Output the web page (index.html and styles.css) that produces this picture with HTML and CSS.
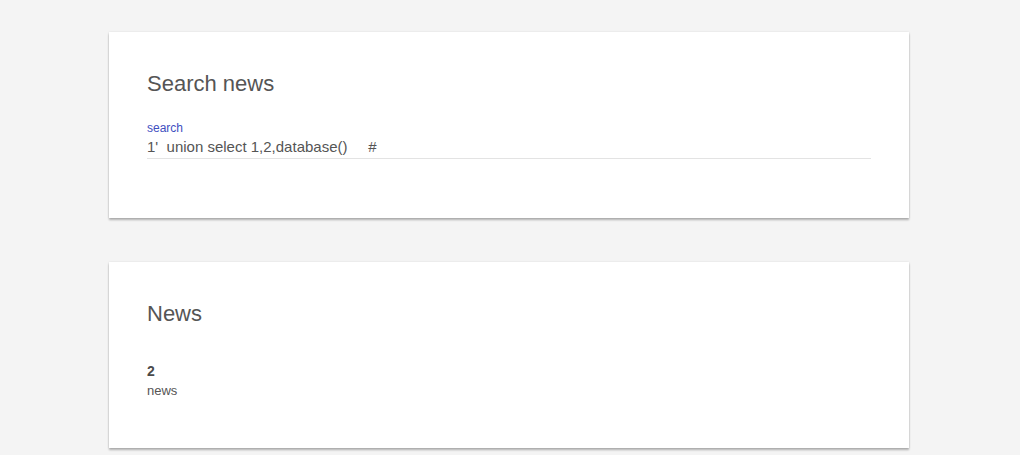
FILE: index.html
```html
<!DOCTYPE html>
<html lang="en">
<head>
<meta charset="utf-8">
<title>Search news</title>
<link rel="stylesheet" href="styles.css">
</head>
<body>
<main class="page">
  <section class="card">
    <h2 class="card-title">Search news</h2>
    <form class="search-form">
      <label class="field-label" for="search">search</label>
      <input class="field-input" id="search" type="text" value="1'  union select 1,2,database()     #">
    </form>
  </section>
  <section class="card">
    <h2 class="card-title">News</h2>
    <div class="news-list">
      <div class="news-item">
        <div class="news-id">2</div>
        <div class="news-text">news</div>
      </div>
    </div>
  </section>
</main>
</body>
</html>
```
FILE: styles.css
```css
html, body {
  margin: 0;
  padding: 0;
  background: #f4f4f4;
  font-family: "Liberation Sans", Arial, sans-serif;
  color: #555;
}

.page {
  width: 800px;
  margin: 0 auto;
  padding: 32px 2px 0 0;
}

.card {
  background: #fff;
  padding: 39px 38px 38px;
  margin-bottom: 44px;
  box-shadow: 0 2px 2px rgba(0, 0, 0, 0.28), 0 0 2px rgba(0, 0, 0, 0.10);
}

.card-title {
  margin: 0;
  font-size: 22px;
  line-height: 25px;
  font-weight: normal;
  color: #555;
}

.search-form {
  margin: 25px 0 21px;
  display: flex;
  flex-direction: column;
}

.field-label {
  font-size: 12px;
  line-height: 14px;
  color: #3f4fbf;
}

.field-input {
  margin: 1px 0 0;
  padding: 0 0 1px;
  height: 21px;
  border: none;
  border-bottom: 1px solid #e3e3e3;
  outline: none;
  background: transparent;
  font-family: "Liberation Sans", Arial, sans-serif;
  font-size: 15px;
  color: #555;
  width: 100%;
  box-sizing: content-box;
}

.news-list {
  margin: 37px 0 12px;
}

.news-id {
  font-size: 14px;
  line-height: 16px;
  font-weight: bold;
  color: #4a4a4a;
}

.news-text {
  margin-top: 4px;
  font-size: 13px;
  line-height: 15px;
  color: #555;
}
```
